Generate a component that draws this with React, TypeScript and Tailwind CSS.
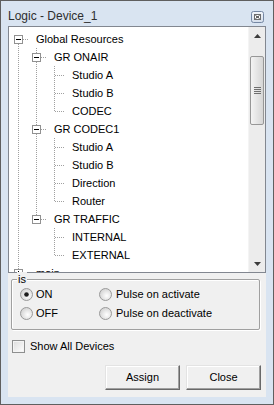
import { useId } from 'react';

type TreeNode = { label: string; children?: TreeNode[]; open?: boolean };

const tree: TreeNode[] = [
  {
    label: 'Global Resources',
    open: true,
    children: [
      { label: 'GR ONAIR', open: true, children: [{ label: 'Studio A' }, { label: 'Studio B' }, { label: 'CODEC' }] },
      {
        label: 'GR CODEC1',
        open: true,
        children: [{ label: 'Studio A' }, { label: 'Studio B' }, { label: 'Direction' }, { label: 'Router' }],
      },
      { label: 'GR TRAFFIC', open: true, children: [{ label: 'INTERNAL' }, { label: 'EXTERNAL' }] },
    ],
  },
  { label: 'main', open: false, children: [{ label: 'x' }] },
];

type Row = {
  label: string;
  level: number;
  first: boolean;
  last: boolean;
  lines: boolean[]; // ancestor levels that still continue
  expandable: boolean;
  open: boolean;
};

function flatten(nodes: TreeNode[], level = 0, lines: boolean[] = []): Row[] {
  const out: Row[] = [];
  nodes.forEach((n, i) => {
    const last = i === nodes.length - 1;
    const expandable = !!n.children && n.children.length > 0;
    out.push({ label: n.label, level, first: level === 0 && i === 0, last, lines, expandable, open: !!n.open });
    if (expandable && n.open) out.push(...flatten(n.children!, level + 1, [...lines, !last]));
  });
  return out;
}

const ROW = 18;
const DOT = '#a0a0a0';

function dotsV(x: number, y0: number, y1: number) {
  const r = [];
  for (let y = y0; y < y1; y++) if (y % 2 === 0) r.push(<rect key={`v${x}-${y}`} x={x} y={y} width={1} height={1} fill={DOT} />);
  return r;
}

function dotsH(y: number, x0: number, x1: number) {
  const r = [];
  for (let x = x0; x < x1; x++) if ((x + y) % 2 === 1) r.push(<rect key={`h${x}`} x={x} y={y} width={1} height={1} fill={DOT} />);
  return r;
}

function Connector({ row }: { row: Row }) {
  const w = row.level * 18 + 24;
  const c = 9 + row.level * 18;
  const mid = 9;
  return (
    <svg width={w} height={ROW} className="shrink-0">
      {row.lines.map((on, k) => (on ? dotsV(9 + k * 18, 0, ROW) : null))}
      {dotsV(c, row.first ? mid : 0, row.last ? mid + 1 : ROW)}
      {dotsH(mid, c + 1, c + 10)}
      {row.expandable && (
        <g>
          <rect x={c - 3.5} y={mid - 3.5} width={8} height={8} fill="#fff" stroke="#919191" />
          <rect x={c - 2} y={mid} width={5} height={1} fill="#000" />
          {!row.open && <rect x={c} y={mid - 2} width={1} height={5} fill="#000" />}
        </g>
      )}
    </svg>
  );
}

function Arrow({ up }: { up?: boolean }) {
  return (
    <svg width="7" height="4" viewBox="0 0 7 4">
      <path d={up ? 'M3.5 0L7 4H0Z' : 'M0 0H7L3.5 4Z'} fill="#3c3c3c" />
    </svg>
  );
}

function Scrollbar() {
  return (
    <div className="w-[17px] shrink-0 bg-[#ececec] border-l border-[#f4f4f4] flex flex-col">
      <div className="h-[17px] flex items-center justify-center">
        <Arrow up />
      </div>
      <div className="flex-1 pt-[12px]">
        <div className="mx-px h-[69px] rounded-[2px] border border-[#979797] bg-gradient-to-r from-[#f4f4f4] to-[#d6d6d6] flex flex-col items-center justify-center gap-px">
          <div className="w-[7px] h-px bg-[#6f6f6f]" />
          <div className="w-[7px] h-px bg-[#6f6f6f]" />
          <div className="w-[7px] h-px bg-[#6f6f6f]" />
          <div className="w-[7px] h-px bg-[#6f6f6f]" />
        </div>
      </div>
      <div className="h-[17px] flex items-center justify-center">
        <Arrow />
      </div>
    </div>
  );
}

function Radio({ checked }: { checked?: boolean }) {
  const id = useId();
  return (
    <svg width="13" height="13" viewBox="0 0 13 13" className="shrink-0">
      <defs>
        <radialGradient id={id} cx="0.6" cy="0.6" r="0.6">
          <stop offset="0" stopColor="#ffffff" />
          <stop offset="1" stopColor="#d4d4d4" />
        </radialGradient>
      </defs>
      <circle cx="6.5" cy="6.5" r="6" fill={`url(#${id})`} stroke="#9a9a9a" />
      {checked && <circle cx="6.5" cy="6.5" r="2.3" fill="#1c1c1c" />}
    </svg>
  );
}

function Button({ children }: { children: string }) {
  return (
    <button className="w-[75px] h-[25px] bg-[#f0f0f0] border border-t-[#e3e3e3] border-l-[#e3e3e3] border-r-[#696969] border-b-[#696969] shadow-[inset_-1px_-1px_0_#a0a0a0,inset_1px_1px_0_#ffffff] text-black">
      {children}
    </button>
  );
}

export default function App() {
  const rows = flatten(tree);
  return (
    <div className="w-[274px] h-[405px] border border-[#5f5f5f] bg-[#d9e4f1] flex flex-col font-['Liberation_Sans',Arial,sans-serif] text-[11px] text-black">
      <div className="h-[25px] shrink-0 flex items-start justify-between pl-[7px] pr-[9px]">
        <span className="mt-[7px] text-[12px] leading-[16px] text-[#2e2e2e]">Logic - Device_1</span>
        <svg width="13" height="12" viewBox="0 0 13 12" className="mt-[10px]">
          <defs>
            <linearGradient id="cb" x1="0" y1="0" x2="0" y2="1">
              <stop offset="0" stopColor="#f4f7fb" />
              <stop offset="1" stopColor="#d3ddea" />
            </linearGradient>
          </defs>
          <rect x="0.5" y="0.5" width="12" height="11" rx="2" fill="url(#cb)" stroke="#7587a3" />
          <rect x="3.5" y="3.5" width="6" height="5" fill="#fff" stroke="#6d6d6d" />
          <path d="M4.5 4.5L8.5 7.5M8.5 4.5L4.5 7.5" stroke="#333" strokeWidth="1" />
        </svg>
      </div>

      <div className="mx-[7px] h-[371px] shrink-0 bg-[#f0f0f0] flex flex-col">
        <div className="h-[247px] shrink-0 border border-[#828790] bg-white flex">
          <div className="flex-1 overflow-hidden pt-[3px]">
            {rows.map((r, i) => (
              <div key={i} className="h-[18px] flex items-center">
                <Connector row={r} />
                <span className="ml-[3px] whitespace-nowrap leading-[18px]">{r.label}</span>
              </div>
            ))}
          </div>
          <Scrollbar />
        </div>

        <div className="relative mt-[6px] ml-[3px] w-[249px] h-[51px] shrink-0 rounded-[2px] border border-[#a0a0a0] shadow-[inset_1px_1px_0_#ffffff,1px_1px_0_#ffffff]">
          <span className="absolute left-[5px] -top-[8px] px-px bg-[#f0f0f0] leading-[14px]">is</span>
          <div className="pt-[5px] pl-[8px] grid grid-cols-[79px_1fr] gap-y-px">
            <label className="h-[18px] flex items-center gap-[3px]">
              <Radio checked />
              <span>ON</span>
            </label>
            <label className="h-[18px] flex items-center gap-[4px]">
              <Radio />
              <span>Pulse on activate</span>
            </label>
            <label className="h-[18px] flex items-center gap-[3px]">
              <Radio />
              <span>OFF</span>
            </label>
            <label className="h-[18px] flex items-center gap-[4px]">
              <Radio />
              <span>Pulse on deactivate</span>
            </label>
          </div>
        </div>

        <label className="mt-[10px] ml-[4px] h-[13px] flex items-center gap-[5px]">
          <span className="w-[13px] h-[13px] border border-[#8e8f8f] bg-gradient-to-br from-[#dcdcdc] to-[#ffffff] shadow-[inset_0_0_0_1px_#f4f4f4]" />
          <span>Show All Devices</span>
        </label>

        <div className="mt-[12px] pr-[5px] flex justify-end gap-[6px]">
          <Button>Assign</Button>
          <Button>Close</Button>
        </div>
      </div>
    </div>
  );
}
